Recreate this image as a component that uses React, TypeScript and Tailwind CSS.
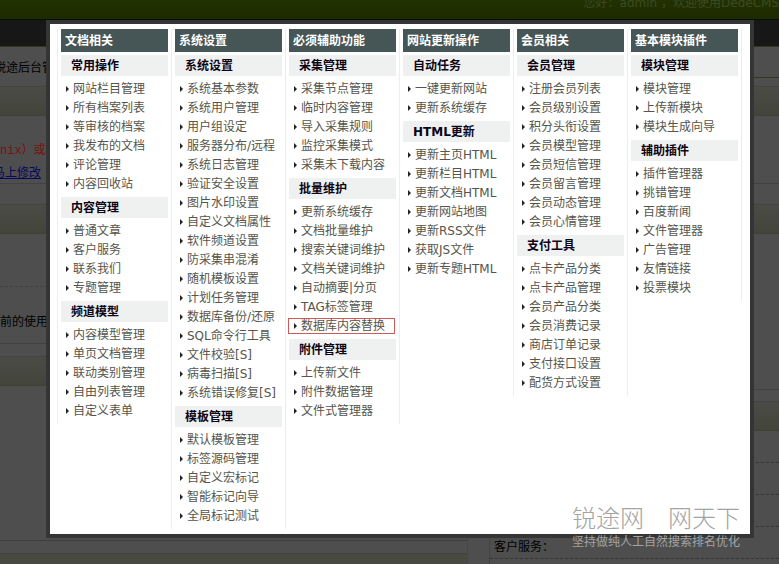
import React from "react"

type Group = { title: string; items: string[] }
type Column = { title: string; groups: Group[] }

const columns: Column[] = [
  {
    title: "文档相关",
    groups: [
      {
        title: "常用操作",
        items: ["网站栏目管理", "所有档案列表", "等审核的档案", "我发布的文档", "评论管理", "内容回收站"],
      },
      { title: "内容管理", items: ["普通文章", "客户服务", "联系我们", "专题管理"] },
      {
        title: "频道模型",
        items: ["内容模型管理", "单页文档管理", "联动类别管理", "自由列表管理", "自定义表单"],
      },
    ],
  },
  {
    title: "系统设置",
    groups: [
      {
        title: "系统设置",
        items: [
          "系统基本参数",
          "系统用户管理",
          "用户组设定",
          "服务器分布/远程",
          "系统日志管理",
          "验证安全设置",
          "图片水印设置",
          "自定义文档属性",
          "软件频道设置",
          "防采集串混淆",
          "随机模板设置",
          "计划任务管理",
          "数据库备份/还原",
          "SQL命令行工具",
          "文件校验[S]",
          "病毒扫描[S]",
          "系统错误修复[S]",
        ],
      },
      {
        title: "模板管理",
        items: ["默认模板管理", "标签源码管理", "自定义宏标记", "智能标记向导", "全局标记测试"],
      },
    ],
  },
  {
    title: "必须辅助功能",
    groups: [
      {
        title: "采集管理",
        items: ["采集节点管理", "临时内容管理", "导入采集规则", "监控采集模式", "采集未下载内容"],
      },
      {
        title: "批量维护",
        items: [
          "更新系统缓存",
          "文档批量维护",
          "搜索关键词维护",
          "文档关键词维护",
          "自动摘要|分页",
          "TAG标签管理",
          "数据库内容替换",
        ],
      },
      { title: "附件管理", items: ["上传新文件", "附件数据管理", "文件式管理器"] },
    ],
  },
  {
    title: "网站更新操作",
    groups: [
      { title: "自动任务", items: ["一键更新网站", "更新系统缓存"] },
      {
        title: "HTML更新",
        items: [
          "更新主页HTML",
          "更新栏目HTML",
          "更新文档HTML",
          "更新网站地图",
          "更新RSS文件",
          "获取JS文件",
          "更新专题HTML",
        ],
      },
    ],
  },
  {
    title: "会员相关",
    groups: [
      {
        title: "会员管理",
        items: [
          "注册会员列表",
          "会员级别设置",
          "积分头衔设置",
          "会员模型管理",
          "会员短信管理",
          "会员留言管理",
          "会员动态管理",
          "会员心情管理",
        ],
      },
      {
        title: "支付工具",
        items: [
          "点卡产品分类",
          "点卡产品管理",
          "会员产品分类",
          "会员消费记录",
          "商店订单记录",
          "支付接口设置",
          "配货方式设置",
        ],
      },
    ],
  },
  {
    title: "基本模块插件",
    groups: [
      { title: "模块管理", items: ["模块管理", "上传新模块", "模块生成向导"] },
      {
        title: "辅助插件",
        items: ["插件管理器", "挑错管理", "百度新闻", "文件管理器", "广告管理", "友情链接", "投票模块"],
      },
    ],
  },
]

const marked = "数据库内容替换"

const MenuItem = ({ label }: { label: string }) => (
  <li className="relative">
    <a href="#" className="flex h-[19px] items-center gap-1 pl-[5px] whitespace-nowrap text-[#55554b]">
      <svg width="3" height="6" viewBox="0 0 3 6" className="shrink-0 fill-[#222]">
        <path d="M0 0L3 3L0 6Z" />
      </svg>
      {label}
    </a>
    {label === marked && (
      <span className="pointer-events-none absolute -left-px right-px top-0.5 h-4 border border-[#cc5a5a]" />
    )}
  </li>
)

// side borders overlap by 1px, so a divider is as long as its taller neighbour
const MenuColumn = ({ title, groups }: Column) => (
  <section className="-ml-px border-x border-[#e9eeee] px-[3px] pb-1">
    <h2 className="h-[23px] bg-[#465657] pl-1 font-bold leading-[25px] text-white">{title}</h2>
    {groups.map((group, i) => (
      <div key={group.title} className={i === 0 ? "mt-[3px]" : "mt-1"}>
        <h3 className="mb-[3px] h-[21px] bg-[#eff1f1] pl-[10px] font-bold leading-[23px] text-[#0c0414]">
          {group.title}
        </h3>
        <ul>
          {group.items.map((item) => (
            <MenuItem key={item} label={item} />
          ))}
        </ul>
      </div>
    ))}
  </section>
)

const Band = () => (
  <div className="h-[30px] border-y border-t-[#444540] border-b-[#3e4134] bg-linear-to-b from-[#4a4b46] to-[#43453b]" />
)

// dimmed admin home behind the menu
const Backdrop = () => (
  <div className="flex min-h-screen flex-col overflow-hidden bg-[#4e4e4e] text-black">
    <header>
      <div className="h-[19px] overflow-hidden bg-linear-to-b from-[#213100] to-[#1d2b00] text-right leading-[6px] whitespace-nowrap text-[#3d4b24]">
        您好：admin ，欢迎使用DedeCMS
      </div>
      <div className="h-7 border-t border-b border-t-[#0a0d00] border-b-[#33361b] bg-[#171717]" />
    </header>
    <div className="flex grow gap-[21px]">
      <div className="flex min-w-0 flex-1 flex-col border-r border-[#464646]">
        <p className="-ml-1.5 h-[39px] leading-[42px]">锐途后台管理</p>
        <Band />
        <div className="h-[68px] border-b border-[#424242] pt-6">
          <p className="font-['Liberation_Mono','Noto_Sans_CJK_SC',monospace] leading-[22px] text-[#7a1010]">
            nix）或只
          </p>
          <a href="#" className="-ml-[7px] block leading-[22px] text-[#08085c] underline">
            马上修改
          </a>
        </div>
        <div className="h-5" />
        <Band />
        <div className="h-[110px] border-b border-[#424242]">
          <div className="h-[53px] border-b border-dashed border-[#404040]" />
          <p className="leading-[70px]">前的使用</p>
        </div>
        <div className="h-3" />
        <Band />
        <div className="h-[155px] border-b border-[#3e3e3e]" />
        <div className="h-3" />
        <div className="min-h-2 grow border-t border-[#42443c] bg-[#484941]" />
      </div>
      <div className="w-[290px] border-l border-[#424242]">
        <div className="h-[31px] border-b border-[#33361f]" />
        <div className="h-2" />
        <Band />
        <div className="h-[68px] border-b border-[#424242]" />
        <div className="h-5" />
        <Band />
        <div className="h-[156px] border-b border-[#424242]" />
        <div className="h-[11px]" />
        <Band />
        <div className="h-8 border-b border-dashed border-[#363636]" />
        <div className="h-8 border-b border-dashed border-[#363636]" />
        <div className="h-8 border-b border-dashed border-[#363636]" />
        <div className="h-8 border-b border-dashed border-[#363636] pl-1 leading-[40px]">客户服务：</div>
      </div>
    </div>
  </div>
)

const App = () => {
  return (
    <main className="relative font-['DejaVu_Sans','Noto_Sans_CJK_SC',sans-serif] text-xs">
      <Backdrop />
      <div
        role="dialog"
        aria-label="功能地图"
        className="absolute top-5 right-[25px] left-[46px] border-4 border-[#343635] bg-white pt-[5px] pr-2 pb-[5px] pl-[7px]"
      >
        <nav className="grid grid-cols-6 items-start pl-px">
          {columns.map((column) => (
            <MenuColumn key={column.title} {...column} />
          ))}
        </nav>
        <div className="absolute right-2.5 -bottom-4 whitespace-nowrap text-[#a3a3a3]">
          <p className="text-2xl leading-[30px] font-light">锐途网　网天下</p>
          <p className="leading-[16px]">坚持做纯人工自然搜索排名优化</p>
        </div>
      </div>
    </main>
  )
}

export default App
